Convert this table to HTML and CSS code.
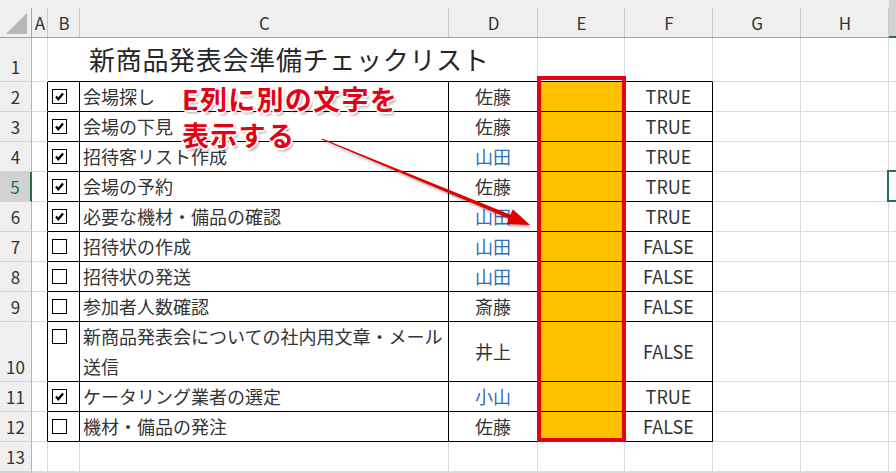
FILE: index.html
```html
<!DOCTYPE html>
<html lang="ja">
<head>
<meta charset="utf-8">
<title>新商品発表会準備チェックリスト</title>
<link rel="stylesheet" href="styles.css">
</head>
<body>
<div class="sheet">
  <!-- header row -->
  <div class="ch corner"><svg width="31" height="37" viewBox="0 0 31 37"><polygon points="6,34 27,34 27,13" fill="#b7b7b7"/></svg></div>
  <div class="ch">A</div>
  <div class="ch">B</div>
  <div class="ch">C</div>
  <div class="ch">D</div>
  <div class="ch">E</div>
  <div class="ch">F</div>
  <div class="ch">G</div>
  <div class="ch">H</div>
  <div class="ch ch-sel"></div>

  <!-- row 1 -->
  <div class="rh">1</div>
  <div class="c"></div>
  <div class="c title tb">新商品発表会準備チェックリスト</div>
  <div class="c tb"></div>
  <div class="c tb"></div>
  <div class="c"></div>
  <div class="c"></div>
  <div class="c last"></div>

  <!-- row 2 -->
  <div class="rh">2</div>
  <div class="c ta"></div>
  <div class="c t"><span class="cb"><svg width="13" height="13" viewBox="0 0 13 13"><polyline points="3,6.5 5.3,9.3 10,3.5" fill="none" stroke="#000" stroke-width="2.2"/></svg></span></div>
  <div class="c t txt">会場探し</div>
  <div class="c t mid">佐藤</div>
  <div class="c t fill"></div>
  <div class="c t mid">TRUE</div>
  <div class="c"></div>
  <div class="c"></div>
  <div class="c last"></div>

  <!-- row 3 -->
  <div class="rh">3</div>
  <div class="c ta"></div>
  <div class="c t"><span class="cb"><svg width="13" height="13" viewBox="0 0 13 13"><polyline points="3,6.5 5.3,9.3 10,3.5" fill="none" stroke="#000" stroke-width="2.2"/></svg></span></div>
  <div class="c t txt">会場の下見</div>
  <div class="c t mid">佐藤</div>
  <div class="c t fill"></div>
  <div class="c t mid">TRUE</div>
  <div class="c"></div>
  <div class="c"></div>
  <div class="c last"></div>

  <!-- row 4 -->
  <div class="rh">4</div>
  <div class="c ta"></div>
  <div class="c t"><span class="cb"><svg width="13" height="13" viewBox="0 0 13 13"><polyline points="3,6.5 5.3,9.3 10,3.5" fill="none" stroke="#000" stroke-width="2.2"/></svg></span></div>
  <div class="c t txt">招待客リスト作成</div>
  <div class="c t mid blue">山田</div>
  <div class="c t fill"></div>
  <div class="c t mid">TRUE</div>
  <div class="c"></div>
  <div class="c"></div>
  <div class="c last"></div>

  <!-- row 5 -->
  <div class="rh rh-sel">5</div>
  <div class="c ta"></div>
  <div class="c t"><span class="cb"><svg width="13" height="13" viewBox="0 0 13 13"><polyline points="3,6.5 5.3,9.3 10,3.5" fill="none" stroke="#000" stroke-width="2.2"/></svg></span></div>
  <div class="c t txt">会場の予約</div>
  <div class="c t mid">佐藤</div>
  <div class="c t fill"></div>
  <div class="c t mid">TRUE</div>
  <div class="c"></div>
  <div class="c"></div>
  <div class="c last active"></div>

  <!-- row 6 -->
  <div class="rh">6</div>
  <div class="c ta"></div>
  <div class="c t"><span class="cb"><svg width="13" height="13" viewBox="0 0 13 13"><polyline points="3,6.5 5.3,9.3 10,3.5" fill="none" stroke="#000" stroke-width="2.2"/></svg></span></div>
  <div class="c t txt">必要な機材・備品の確認</div>
  <div class="c t mid blue">山田</div>
  <div class="c t fill"></div>
  <div class="c t mid">TRUE</div>
  <div class="c"></div>
  <div class="c"></div>
  <div class="c last"></div>

  <!-- row 7 -->
  <div class="rh">7</div>
  <div class="c ta"></div>
  <div class="c t"><span class="cb"></span></div>
  <div class="c t txt">招待状の作成</div>
  <div class="c t mid blue">山田</div>
  <div class="c t fill"></div>
  <div class="c t mid">FALSE</div>
  <div class="c"></div>
  <div class="c"></div>
  <div class="c last"></div>

  <!-- row 8 -->
  <div class="rh">8</div>
  <div class="c ta"></div>
  <div class="c t"><span class="cb"></span></div>
  <div class="c t txt">招待状の発送</div>
  <div class="c t mid blue">山田</div>
  <div class="c t fill"></div>
  <div class="c t mid">FALSE</div>
  <div class="c"></div>
  <div class="c"></div>
  <div class="c last"></div>

  <!-- row 9 -->
  <div class="rh">9</div>
  <div class="c ta"></div>
  <div class="c t"><span class="cb"></span></div>
  <div class="c t txt">参加者人数確認</div>
  <div class="c t mid">斎藤</div>
  <div class="c t fill"></div>
  <div class="c t mid">FALSE</div>
  <div class="c"></div>
  <div class="c"></div>
  <div class="c last"></div>

  <!-- row 10 -->
  <div class="rh">10</div>
  <div class="c ta"></div>
  <div class="c t"><span class="cb"></span></div>
  <div class="c t txt wrap">新商品発表会についての社内用文章・メール<br>送信</div>
  <div class="c t mid">井上</div>
  <div class="c t fill"></div>
  <div class="c t mid">FALSE</div>
  <div class="c"></div>
  <div class="c"></div>
  <div class="c last"></div>

  <!-- row 11 -->
  <div class="rh">11</div>
  <div class="c ta"></div>
  <div class="c t"><span class="cb"><svg width="13" height="13" viewBox="0 0 13 13"><polyline points="3,6.5 5.3,9.3 10,3.5" fill="none" stroke="#000" stroke-width="2.2"/></svg></span></div>
  <div class="c t txt">ケータリング業者の選定</div>
  <div class="c t mid blue">小山</div>
  <div class="c t fill"></div>
  <div class="c t mid">TRUE</div>
  <div class="c"></div>
  <div class="c"></div>
  <div class="c last"></div>

  <!-- row 12 -->
  <div class="rh">12</div>
  <div class="c ta"></div>
  <div class="c t"><span class="cb"></span></div>
  <div class="c t txt">機材・備品の発注</div>
  <div class="c t mid">佐藤</div>
  <div class="c t fill"></div>
  <div class="c t mid">FALSE</div>
  <div class="c"></div>
  <div class="c"></div>
  <div class="c last"></div>

  <!-- row 13 -->
  <div class="rh">13</div>
  <div class="c"></div>
  <div class="c"></div>
  <div class="c"></div>
  <div class="c"></div>
  <div class="c"></div>
  <div class="c"></div>
  <div class="c"></div>
  <div class="c"></div>
  <div class="c last"></div>

  <!-- row 14 -->
  <div class="rh"></div>
  <div class="c"></div>
  <div class="c"></div>
  <div class="c"></div>
  <div class="c"></div>
  <div class="c"></div>
  <div class="c"></div>
  <div class="c"></div>
  <div class="c"></div>
  <div class="c last"></div>
</div>

<div class="redbox"></div>
<div class="callout">E列に別の文字を<br>表示する</div>
<svg class="arrow" width="896" height="473" viewBox="0 0 896 473">
  <polygon points="322.2,138.5 510.5,214.8 512.8,209.2 530,225 506.6,224.0 508.9,218.4 321.8,139.5" fill="#e00000"/>
</svg>
</body>
</html>
```

FILE: styles.css
```css
html, body {
  margin: 0;
  padding: 0;
  background: #fff;
  overflow: hidden;
}
body {
  width: 896px;
  height: 473px;
  position: relative;
  font-family: "Noto Sans CJK JP", "Noto Sans", sans-serif;
  color: #333;
}
.sheet {
  display: grid;
  grid-template-columns: 32px 16px 32px 369px 89px 87px 88px 88px 88px 7px;
  grid-template-rows: 38px 44px repeat(8, 30px) 60px 30px 30px 30px 1px;
  width: 896px;
  height: 473px;
}
.ch {
  box-sizing: border-box;
  background: linear-gradient(#c9c9c9, #c9c9c9) no-repeat right bottom / 1px 29px, #efefef;
  border-bottom: 1px solid #9f9f9f;
  padding-top: 8px;
  display: flex;
  align-items: center;
  justify-content: center;
  font-size: 17px;
  color: #333;
}
.corner {
  background: linear-gradient(#a8a8a8, #a8a8a8) no-repeat right bottom / 1px 29px, #efefef;
  padding-top: 0;
  align-items: flex-start;
  justify-content: flex-start;
}
.corner svg { display: block; }
.ch-sel {
  background: #d2d2d2;
  border-bottom: 2px solid #217346;
}
.rh {
  box-sizing: border-box;
  background: #efefef;
  border-right: 1px solid #b4b4b4;
  border-bottom: 1px solid #d4d4d4;
  display: flex;
  align-items: flex-end;
  justify-content: center;
  font-size: 17px;
  line-height: 28px;
  color: #333;
  overflow: hidden;
}
.rh-sel {
  background: #d2d2d2;
  color: #217346;
  border-right: 2px solid #217346;
}
.c {
  box-sizing: border-box;
  border-right: 1px solid #dadada;
  border-bottom: 1px solid #dadada;
  display: flex;
  align-items: center;
  font-size: 18px;
  white-space: nowrap;
}
.c.last { border-right: none; }
.ta { border-right-color: #000; }
.t {
  border-right-color: #000;
  border-bottom-color: #000;
  padding-bottom: 2px;
}
.tb { border-bottom-color: #000; }
.title {
  grid-column: span 3;
  align-items: flex-end;
  padding-left: 41px;
  padding-bottom: 4px;
  font-size: 26px;
  letter-spacing: 0.7px;
  line-height: 36px;
  color: #262626;
}
.txt {
  padding-left: 3px;
}
.wrap {
  white-space: normal;
  line-height: 30px;
}
.mid {
  justify-content: center;
}
.blue { color: #2f6fb6; }
.fill { background: #ffc000; }
.cb {
  align-self: flex-start;
  box-sizing: border-box;
  width: 15px;
  height: 15px;
  margin: 7px 0 0 4px;
  border: 1px solid #000;
  background: #fff;
  display: block;
}
.cb svg { display: block; }
.active { position: relative; }
.active::after {
  content: "";
  position: absolute;
  left: -2px;
  top: -2px;
  width: 12px;
  height: 32px;
  box-sizing: border-box;
  border: 2px solid #217346;
  border-right: none;
}
.redbox {
  position: absolute;
  left: 537px;
  top: 76px;
  width: 89px;
  height: 366px;
  box-sizing: border-box;
  border: 4px solid #e50012;
}
.callout {
  position: absolute;
  left: 182px;
  top: 81px;
  font-size: 27px;
  line-height: 36px;
  font-weight: 700;
  letter-spacing: 1.3px;
  color: #e60012;
  white-space: nowrap;
  text-shadow:
    1px 0 0 #fff, -1px 0 0 #fff, 0 1px 0 #fff, 0 -1px 0 #fff,
    2px 0 0 #fff, -2px 0 0 #fff, 0 2px 0 #fff, 0 -2px 0 #fff,
    1px 1px 0 #fff, -1px -1px 0 #fff, 1px -1px 0 #fff, -1px 1px 0 #fff,
    2px 3px 3px rgba(0, 0, 0, 0.35);
}
.arrow {
  position: absolute;
  left: 0;
  top: 0;
  filter: drop-shadow(1px 2px 1px rgba(0, 0, 0, 0.3));
  pointer-events: none;
}
```
